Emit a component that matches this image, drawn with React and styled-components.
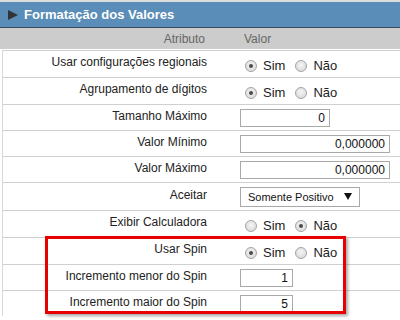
import React from 'react';
import styled, { createGlobalStyle } from 'styled-components'

const GlobalStyle = createGlobalStyle`
  body {
    margin: 0;
    background: #fff;
    font-family: "Liberation Sans", Arial, sans-serif;
    font-size: 12px;
    color: #222;
  }
`

const Panel = styled.div`
  width: 400px;
  height: 320px;
  overflow: hidden;
  border-top: 2px solid #dcdcdc;
  box-sizing: border-box;
`

const TitleBar = styled.div`
  height: 25px;
  background: #5a8db7;
  border-bottom: 1px solid #3b4b5c;
  display: flex;
  align-items: center;
  padding-left: 8px;
  color: #fff;
  font-weight: bold;
  font-size: 13px;
`

const Arrow = styled.span`
  width: 0;
  height: 0;
  border-top: 5px solid transparent;
  border-bottom: 5px solid transparent;
  border-left: 10px solid #333;
  margin-right: 6px;
  margin-top: 1px;
`

const HeadRow = styled.div`
  display: grid;
  grid-template-columns: 214px 1fr;
  height: 21px;
  align-items: center;
  background: #cccccc;
  border-bottom: 1px solid #fff;
  color: #666;
`

const HeadCell = styled.div`
  text-align: ${p => p.$right ? 'right' : 'left'};
  padding-right: ${p => p.$right ? '9px' : '0'};
  padding-left: ${p => p.$right ? '0' : '30px'};
`

const Body = styled.div`
  position: relative;
  margin-left: 2px;
  border-left: 1px solid #d8d8d8;
`

const Row = styled.div`
  display: grid;
  grid-template-columns: 211px 1fr;
  align-items: center;
  height: ${p => p.$h}px;
  box-sizing: border-box;
  border-top: 1px solid #d0d0d0;
`

const Label = styled.div`
  text-align: right;
  padding-right: 7px;
  padding-bottom: 4px;
`

const Value = styled.div`
  display: flex;
  align-items: center;
  padding-left: 26px;
`

const RadioOption = styled.label`
  display: flex;
  align-items: center;
  margin-left: ${p => p.$first ? '5px' : '10px'};
  padding-top: 3px;
  font-size: 13px;
`

const RadioDot = styled.span`
  width: 12px;
  height: 12px;
  box-sizing: border-box;
  border-radius: 50%;
  border: 1px solid #a4a4a4;
  background: radial-gradient(circle at 50% 40%, #f4f4f4 0%, #d6d6d6 100%);
  display: flex;
  align-items: center;
  justify-content: center;
  margin-right: 6px;

  &::after {
    content: "";
    width: 4px;
    height: 4px;
    border-radius: 50%;
    background: #4a4a4a;
    display: ${p => p.$checked ? 'block' : 'none'};
  }
`

const TextBox = styled.div`
  width: ${p => p.$w}px;
  height: 18px;
  box-sizing: border-box;
  border: 1px solid #a9a9a9;
  text-align: right;
  padding-right: 4px;
  line-height: 16px;
  font-size: 12px;
  color: #111;
  background: #fff;
`

const Select = styled.div`
  width: 120px;
  height: 20px;
  box-sizing: border-box;
  border: 1px solid #a9a9a9;
  display: flex;
  align-items: center;
  justify-content: space-between;
  padding: 0 7px 0 7px;
  font-size: 11px;
  color: #111;
`

const SelectArrow = styled.span`
  width: 0;
  height: 0;
  border-left: 4px solid transparent;
  border-right: 4px solid transparent;
  border-top: 7px solid #111;
`

const Highlight = styled.div`
  position: absolute;
  left: 42px;
  top: 186px;
  width: 301px;
  height: 78px;
  box-sizing: border-box;
  border: 3px solid #e60000;
  box-shadow: 2px 2px 3px rgba(0, 0, 0, 0.35);
  pointer-events: none;
`

const YesNo = ({ yes }) => (
  <>
    <RadioOption $first><RadioDot $checked={yes} />Sim</RadioOption>
    <RadioOption><RadioDot $checked={!yes} />Não</RadioOption>
  </>
)

const rows = [
  { label: 'Usar configurações regionais', h: 27, radio: true },
  { label: 'Agrupamento de dígitos', h: 27, radio: true },
  { label: 'Tamanho Máximo', h: 26, text: '0', w: 90 },
  { label: 'Valor Mínimo', h: 26, text: '0,000000', w: 150 },
  { label: 'Valor Máximo', h: 26, text: '0,000000', w: 150 },
  { label: 'Aceitar', h: 28, select: 'Somente Positivo' },
  { label: 'Exibir Calculadora', h: 27, radio: false },
  { label: 'Usar Spin', h: 27, radio: true },
  { label: 'Incremento menor do Spin', h: 26, text: '1', w: 53 },
  { label: 'Incremento maior do Spin', h: 26, text: '5', w: 53 },
]

export default function App() {
  return (
    <>
      <GlobalStyle />
      <Panel>
        <TitleBar><Arrow />Formatação dos Valores</TitleBar>
        <HeadRow>
          <HeadCell $right>Atributo</HeadCell>
          <HeadCell>Valor</HeadCell>
        </HeadRow>
        <Body>
          {rows.map(row => (
            <Row key={row.label} $h={row.h}>
              <Label>{row.label}</Label>
              <Value>
                {row.radio !== undefined && <YesNo yes={row.radio} />}
                {row.text !== undefined && <TextBox $w={row.w}>{row.text}</TextBox>}
                {row.select && <Select>{row.select}<SelectArrow /></Select>}
              </Value>
            </Row>
          ))}
          <Highlight />
        </Body>
      </Panel>
    </>
  )
}
